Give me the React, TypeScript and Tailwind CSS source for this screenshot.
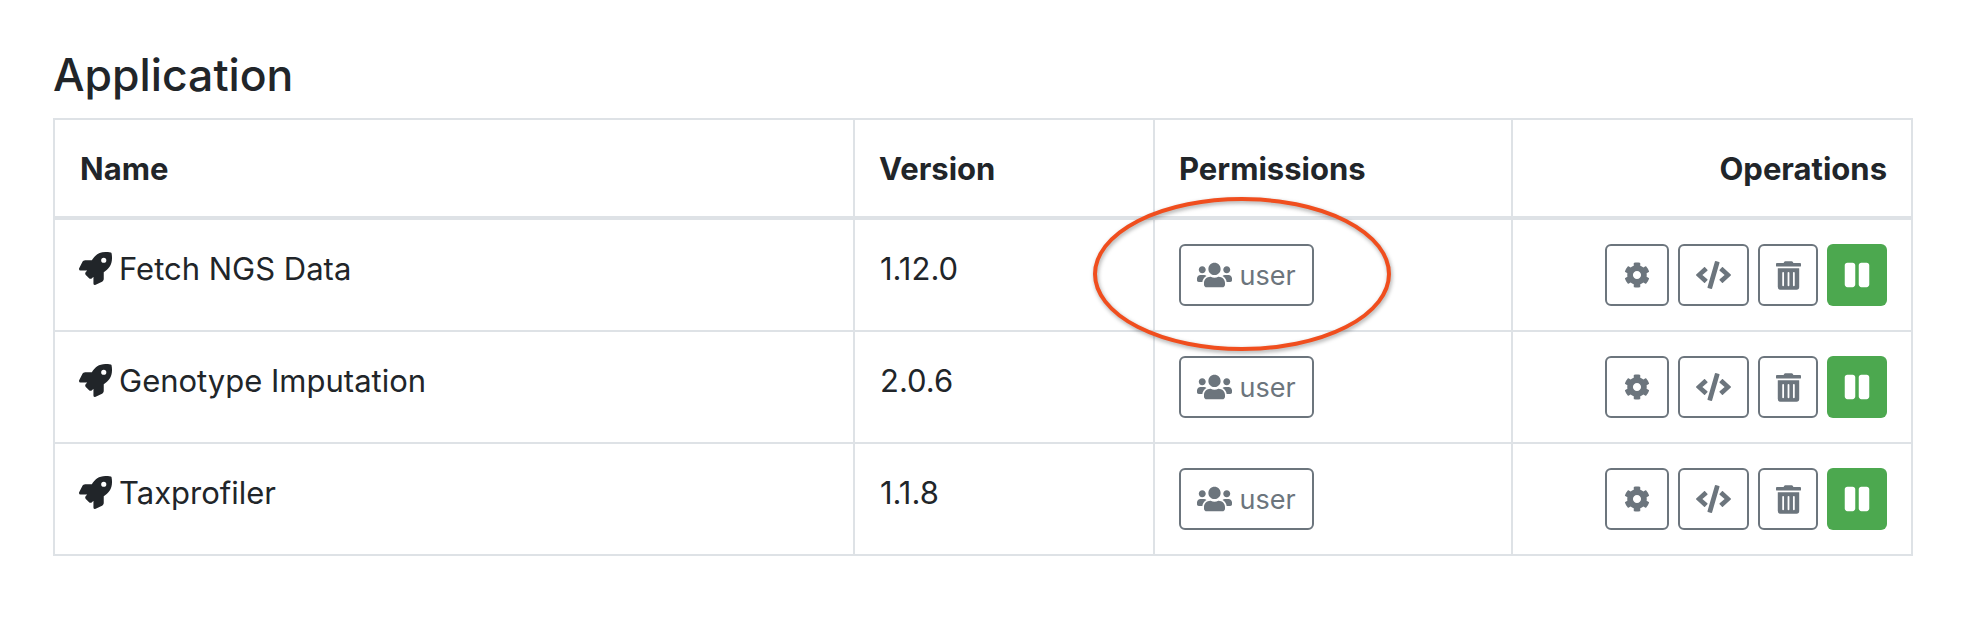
import { FaCode, FaCog, FaPause, FaRocket, FaTrashAlt, FaUsers } from 'react-icons/fa'

const apps = [
  { name: 'Fetch NGS Data', version: '1.12.0' },
  { name: 'Genotype Imputation', version: '2.0.6' },
  { name: 'Taxprofiler', version: '1.1.8' },
]

const outlineBtn =
  'flex h-[62px] items-center justify-center rounded-[6px] border-2 border-[#6c757d] bg-white text-[#6c757d]'

const AppRow = ({ name, version }: { name: string; version: string }) => (
  <tr className="h-[111px] border-b-2 border-[#dee2e6] last:border-b-0">
    <td className="border-r-2 border-[#dee2e6] px-[25px] pt-[24px] align-top">
      <div className="-ml-[1px] flex items-center gap-[7px] text-[31px] leading-[49px] text-[#212529]">
        <FaRocket className="h-[33px] w-[33px] shrink-0" />
        <span>{name}</span>
      </div>
    </td>
    <td className="border-r-2 border-[#dee2e6] px-[25px] pt-[24px] align-top text-[31px] leading-[49px] text-[#212529]">
      {version}
    </td>
    <td className="border-r-2 border-[#dee2e6] px-[24px] py-[24px] align-top">
      <button className={`${outlineBtn} w-[135px] gap-[7px] text-[27px]`}>
        <FaUsers className="h-[28px] w-[35px]" />
        <span className="pt-[2px]">user</span>
      </button>
    </td>
    <td className="pl-[25px] pr-[24px] py-[24px] align-top">
      <div className="flex justify-end gap-[9px]">
        <button className={`${outlineBtn} w-[64px]`}>
          <FaCog className="h-[26px] w-[26px]" />
        </button>
        <button className={`${outlineBtn} w-[71px]`}>
          <FaCode className="h-[28px] w-[35px]" />
        </button>
        <button className={`${outlineBtn} w-[60px]`}>
          <FaTrashAlt className="h-[29px] w-[25px]" />
        </button>
        <button className="flex h-[62px] w-[60px] items-center justify-center rounded-[6px] bg-[#4ca84f] text-white">
          <FaPause className="h-[28px] w-[26px]" />
        </button>
      </div>
    </td>
  </tr>
)

export default function App() {
  return (
    <div className="relative h-[618px] w-[1968px] overflow-hidden bg-white pl-[53px] pt-[45px] font-['Inter','Liberation_Sans',sans-serif]">
      <h2 className="mb-[13px] text-[44.5px] leading-[60px] font-medium text-[#212529]">Application</h2>
      <table className="w-[1860px] table-fixed border-collapse border-2 border-[#dee2e6]">
        <colgroup>
          <col className="w-[800px]" />
          <col className="w-[300px]" />
          <col className="w-[358px]" />
          <col />
        </colgroup>
        <thead>
          <tr className="h-[99px] border-b-4 border-[#dee2e6] text-[31px] font-bold text-[#212529]">
            <th className="border-r-2 border-[#dee2e6] px-[25px] pt-[2px] text-left">Name</th>
            <th className="border-r-2 border-[#dee2e6] px-[24px] pt-[2px] text-left">Version</th>
            <th className="border-r-2 border-[#dee2e6] px-[24px] pt-[2px] text-left">Permissions</th>
            <th className="pl-[25px] pr-[24px] pt-[2px] text-right">Operations</th>
          </tr>
        </thead>
        <tbody>
          {apps.map((app) => (
            <AppRow key={app.name} name={app.name} version={app.version} />
          ))}
        </tbody>
      </table>
      {/* hand-drawn annotation circling the first permission badge */}
      <svg className="absolute left-[1085px] top-[190px] drop-shadow-[1px_2px_2px_rgba(0,0,0,0.35)]" width="316" height="170" viewBox="0 0 316 170" fill="none">
        <ellipse cx="157" cy="84" rx="147" ry="75" stroke="#f04e1e" strokeWidth="4" />
      </svg>
    </div>
  )
}
